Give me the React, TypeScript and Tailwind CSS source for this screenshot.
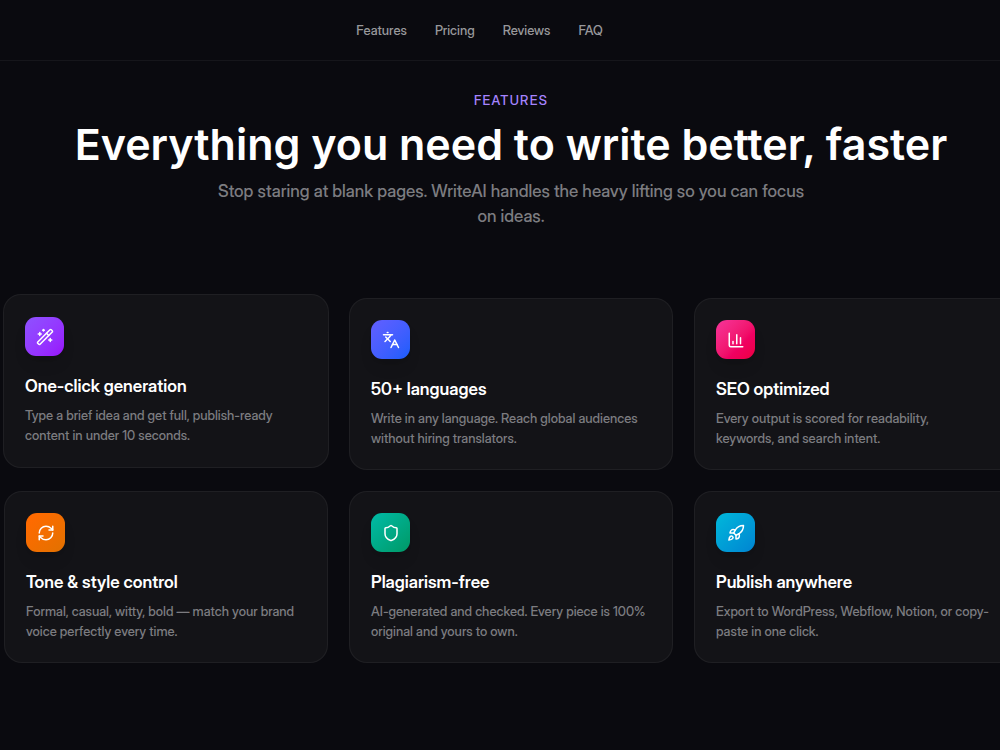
import { ChartColumn, Languages, RefreshCw, Rocket, Shield, WandSparkles, type LucideIcon } from "lucide-react";

type Feature = {
  title: string;
  text: string;
  icon: LucideIcon;
  tile: string;
  raised?: boolean;
};

const links = [
  { label: "Features", href: "#features" },
  { label: "Pricing", href: "#pricing" },
  { label: "Reviews", href: "#reviews" },
  { label: "FAQ", href: "#faq" },
];

const features: Feature[] = [
  {
    title: "One-click generation",
    text: "Type a brief idea and get full, publish-ready content in under 10 seconds.",
    icon: WandSparkles,
    tile: "from-violet-500 to-purple-600",
    raised: true,
  },
  {
    title: "50+ languages",
    text: "Write in any language. Reach global audiences without hiring translators.",
    icon: Languages,
    tile: "from-indigo-500 to-blue-600",
  },
  {
    title: "SEO optimized",
    text: "Every output is scored for readability, keywords,\u00a0and search intent.",
    icon: ChartColumn,
    tile: "from-pink-500 to-rose-600",
  },
  {
    title: "Tone & style control",
    text: "Formal, casual, witty, bold — match your brand voice perfectly every time.",
    icon: RefreshCw,
    tile: "from-orange-500 to-amber-600",
  },
  {
    title: "Plagiarism-free",
    text: "AI-generated and checked. Every piece is 100% original and yours to own.",
    icon: Shield,
    tile: "from-teal-500 to-emerald-600",
  },
  {
    title: "Publish anywhere",
    text: "Export to WordPress, Webflow, Notion, or copy-paste in one click.",
    icon: Rocket,
    tile: "from-cyan-500 to-sky-600",
  },
];

function FeatureCard({ title, text, icon: Icon, tile, raised }: Feature) {
  return (
    <article
      className={
        raised
          ? "-mx-px -my-px -translate-y-[3px] rounded-[18px] border border-white/5 bg-[#131317] px-[21px] pt-[22px] pb-[21px]"
          : "rounded-[18px] border border-white/5 bg-[#131317] p-[21px]"
      }
    >
      <div className={`flex size-[39px] items-center justify-center rounded-[11px] bg-linear-to-br shadow-lg ${tile}`}>
        <Icon size={18} className="text-white" aria-hidden="true" />
      </div>
      <h3 className="mt-[18px] text-[17px] leading-6 font-semibold text-white">{title}</h3>
      <p className="mt-[7px] text-[13px] leading-5 font-medium text-[#7c7c80]">{text}</p>
    </article>
  );
}

export default function App() {
  return (
    <div className="min-h-screen overflow-hidden bg-[#0a0a0f] font-['Inter_Display','Inter',sans-serif]">
      <header className="border-b border-white/5">
        <nav aria-label="Main" className="mr-[41px] flex h-[60px] items-center justify-center gap-7">
          {links.map((link) => (
            <a key={link.href} href={link.href} className="text-[13px] leading-5 font-medium text-[#98989b]">
              {link.label}
            </a>
          ))}
        </nav>
      </header>

      <main className="-mr-[18px] ml-1 pb-20">
        <section id="features" className="pt-[30px]">
          <div className="text-center">
            <p className="text-[13px] leading-[18px] font-medium tracking-widest text-[#a684ff] uppercase">Features</p>
            <h2 className="mt-[11px] font-['Inter',sans-serif] text-[43px] leading-12 font-semibold text-white">
              Everything you need to write better, faster
            </h2>
            <p className="mx-auto mt-[11px] max-w-[600px] text-[17px] leading-[25px] font-medium text-[#7c7c80]">
              Stop staring at blank pages. WriteAI handles the heavy lifting so you can focus on ideas.
            </p>
          </div>

          <div className="mt-[69px] grid grid-cols-3 gap-[21px]">
            {features.map((feature) => (
              <FeatureCard key={feature.title} {...feature} />
            ))}
          </div>
        </section>
      </main>
    </div>
  );
}
